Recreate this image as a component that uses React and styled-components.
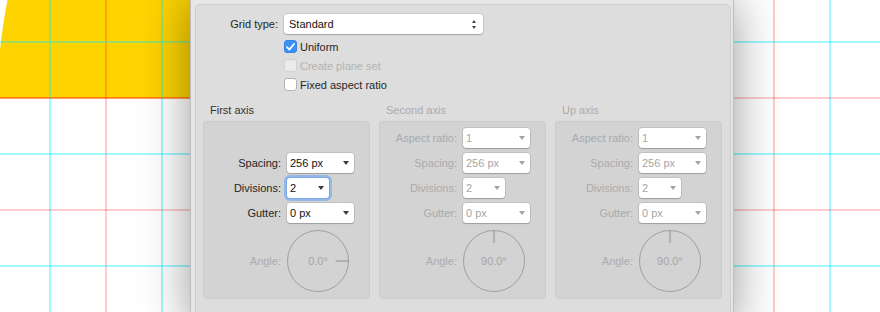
import React from 'react';
import styled, { createGlobalStyle } from 'styled-components';

const Global = createGlobalStyle`
  html, body { margin: 0; padding: 0; background: #fff; }
  body { font-family: "Liberation Sans", Arial, sans-serif; -webkit-font-smoothing: antialiased; }
`;

const Page = styled.div`
  position: relative;
  width: 880px;
  height: 312px;
  overflow: hidden;
  background: #fff;
`;

const CanvasSvg = styled.svg`
  position: absolute;
  left: 0;
  top: 0;
  display: block;
`;

const Dialog = styled.div`
  position: absolute;
  left: 190px;
  top: 0;
  width: 544px;
  height: 330px;
  box-sizing: border-box;
  display: flex;
  flex-direction: column;
  background: #e6e6e6;
  border-left: 1px solid #bcbcbc;
  border-right: 1px solid #bcbcbc;
  box-shadow: 0 0 45px rgba(0, 0, 0, 0.4);
  padding: 4px 2px 0 4px;
`;

const Panel = styled.div`
  flex: 1;
  box-sizing: border-box;
  background: #dddddd;
  border: 1px solid #cdcdcd;
  border-radius: 5px;
  padding: 9px 6px 0 7px;
  display: flex;
  flex-direction: column;
`;

const TopRow = styled.div`
  display: grid;
  grid-template-columns: 75px 199px;
  column-gap: 6px;
  align-items: center;
  height: 20px;
`;

const Label = styled.span`
  font-size: 11px;
  text-align: right;
  white-space: nowrap;
  color: ${(p) => (p.$disabled ? '#ababab' : '#262626')};
`;

const CheckList = styled.div`
  display: flex;
  flex-direction: column;
  margin: 3px 0 0 81px;
`;

const CheckRow = styled.div`
  display: flex;
  align-items: center;
  gap: 3px;
  height: 19px;
  font-size: 11px;
  color: ${(p) => (p.$disabled ? '#b3b3b3' : '#262626')};
`;

const Box = styled.span`
  width: 13px;
  height: 13px;
  box-sizing: border-box;
  border-radius: 3px;
  display: flex;
  align-items: center;
  justify-content: center;
  background: ${(p) => (p.$checked ? '#3a90f7' : p.$disabled ? '#ebebeb' : '#ffffff')};
  border: 1px solid ${(p) => (p.$checked ? '#3584e8' : p.$disabled ? '#d2d2d2' : '#b4b4b4')};
`;

const SelectBox = styled.div`
  width: ${(p) => p.$w}px;
  height: 20px;
  box-sizing: border-box;
  background: #fff;
  border-radius: 3px;
  box-shadow: ${(p) =>
    p.$focus
      ? '0 0 0 1px #7aa9ea, 0 0 0 3px rgba(103, 160, 240, 0.55)'
      : '0 0 0 0.5px rgba(0,0,0,0.18), 0 1px 1px rgba(0,0,0,0.18)'};
  display: flex;
  align-items: center;
  justify-content: space-between;
  padding: 0 5px 0 ${(p) => p.$pl || 3}px;
  font-size: 11px;
  color: ${(p) => (p.$disabled ? '#a6a6a6' : '#111')};
`;

const Caret = styled.span`
  width: 0;
  height: 0;
  border-left: 3px solid transparent;
  border-right: 3px solid transparent;
  border-top: 4px solid ${(p) => (p.$disabled ? '#a3a3a3' : '#3c3c3c')};
`;

const Stepper = styled.span`
  display: flex;
  flex-direction: column;
  gap: 3px;
  margin-right: 2px;
`;

const Tri = styled.span`
  width: 0;
  height: 0;
  border-left: 2.5px solid transparent;
  border-right: 2.5px solid transparent;
  ${(p) => (p.$up ? 'border-bottom: 3px solid #444;' : 'border-top: 3px solid #444;')}
`;

const Sections = styled.div`
  display: grid;
  grid-template-columns: repeat(3, 167px);
  column-gap: 9px;
  margin-top: 9px;
`;

const Section = styled.div`
  display: flex;
  flex-direction: column;
`;

const SectionTitle = styled.div`
  height: 14px;
  line-height: 14px;
  padding-left: 7px;
  margin-bottom: 4px;
  font-size: 11px;
  color: ${(p) => (p.$disabled ? '#ababab' : '#333')};
`;

const GroupBox = styled.div`
  box-sizing: border-box;
  background: #d3d3d3;
  border: 1px solid #cbcbcb;
  border-radius: 4px;
  padding: 6px 0 6px 0;
`;

const FieldGrid = styled.div`
  display: grid;
  grid-template-columns: 77px 67px;
  column-gap: 6px;
  row-gap: 5px;
  grid-auto-rows: 20px;
  align-items: center;
`;

const Field = styled.div`
  display: contents;
`;

const HiddenField = styled.div`
  grid-column: 1 / span 2;
  visibility: hidden;
`;

const DialRow = styled.div`
  display: grid;
  grid-template-columns: 77px 62px;
  column-gap: 6px;
  align-items: center;
  margin-top: 7px;
`;

const DialSvg = styled.svg`
  display: block;
`;

function Select({ value, w, disabled, focus }) {
  return (
    <SelectBox $w={w} $disabled={disabled} $focus={focus}>
      <span>{value}</span>
      <Caret $disabled={disabled} />
    </SelectBox>
  );
}

function Check({ checked, disabled, children }) {
  return (
    <CheckRow $disabled={disabled}>
      <Box $checked={checked} $disabled={disabled}>
        {checked && (
          <svg width="9" height="8" viewBox="0 0 9 8">
            <path d="M1 4.2 L3.4 6.6 L8 1" fill="none" stroke="#fff" strokeWidth="1.7" strokeLinecap="round" strokeLinejoin="round" />
          </svg>
        )}
      </Box>
      <span>{children}</span>
    </CheckRow>
  );
}

function Dial({ angle }) {
  const vertical = angle === 90;
  return (
    <DialSvg width="62" height="62" viewBox="0 0 62 62">
      <circle cx="31" cy="31" r="30.5" fill="none" stroke="#a0a0a0" strokeWidth="1" />
      {vertical ? (
        <line x1="31" y1="0.5" x2="31" y2="13" stroke="#8e8e8e" strokeWidth="1" />
      ) : (
        <line x1="48.5" y1="31" x2="61.5" y2="31" stroke="#8e8e8e" strokeWidth="1" />
      )}
      <text
        x="31"
        y="35"
        textAnchor="middle"
        fontSize="11"
        fontFamily='"Liberation Sans", Arial, sans-serif'
        fill="#a6a6a6"
      >
        {angle.toFixed(1)}°
      </text>
    </DialSvg>
  );
}

function AxisSection({ title, disabled, showAspect, angle, focusDivisions }) {
  return (
    <Section>
      <SectionTitle $disabled={disabled}>{title}</SectionTitle>
      <GroupBox>
        <FieldGrid>
          {showAspect ? (
            <Field>
              <Label $disabled={disabled}>Aspect ratio:</Label>
              <Select value="1" w={67} disabled={disabled} />
            </Field>
          ) : (
            <HiddenField />
          )}
          <Field>
            <Label $disabled={disabled}>Spacing:</Label>
            <Select value="256 px" w={67} disabled={disabled} />
          </Field>
          <Field>
            <Label $disabled={disabled}>Divisions:</Label>
            <Select value="2" w={42} disabled={disabled} focus={focusDivisions} />
          </Field>
          <Field>
            <Label $disabled={disabled}>Gutter:</Label>
            <Select value="0 px" w={67} disabled={disabled} />
          </Field>
        </FieldGrid>
        <DialRow>
          <Label $disabled>Angle:</Label>
          <Dial angle={angle} />
        </DialRow>
      </GroupBox>
    </Section>
  );
}

function Canvas() {
  const cyan = 'rgba(0, 240, 255, 0.5)';
  const pink = 'rgba(255, 0, 0, 0.27)';
  const vLines = [
    [50, cyan],
    [106, pink],
    [162, cyan],
    [218, pink],
    [774, pink],
    [830, cyan],
  ];
  const hLines = [
    [42, cyan],
    [98, pink],
    [154, cyan],
    [210, pink],
    [266, cyan],
  ];
  return (
    <CanvasSvg width="880" height="312" viewBox="0 0 880 312">
      <path d="M7.5 0 Q2 28 -1 60 L-1 98 L230 98 L230 0 Z" fill="#fdd300" />
      <line x1="0" y1="98" x2="230" y2="98" stroke="rgba(255,110,0,0.6)" strokeWidth="1.5" />
      {vLines.map(([x, c]) => (
        <line key={'v' + x} x1={x} y1="0" x2={x} y2="312" stroke={c} strokeWidth="1.5" />
      ))}
      {hLines.map(([y, c]) => (
        <line key={'h' + y} x1="0" y1={y} x2="880" y2={y} stroke={c} strokeWidth="1.5" />
      ))}
    </CanvasSvg>
  );
}

export default function App() {
  return (
    <Page>
      <Global />
      <Canvas />
      <Dialog>
        <Panel>
          <TopRow>
            <Label>Grid type:</Label>
            <SelectBox $w={199} $pl={5}>
              <span>Standard</span>
              <Stepper>
                <Tri $up />
                <Tri />
              </Stepper>
            </SelectBox>
          </TopRow>
          <CheckList>
            <Check checked>Uniform</Check>
            <Check disabled>Create plane set</Check>
            <Check>Fixed aspect ratio</Check>
          </CheckList>
          <Sections>
            <AxisSection title="First axis" angle={0} focusDivisions />
            <AxisSection title="Second axis" disabled showAspect angle={90} />
            <AxisSection title="Up axis" disabled showAspect angle={90} />
          </Sections>
        </Panel>
      </Dialog>
    </Page>
  );
}
